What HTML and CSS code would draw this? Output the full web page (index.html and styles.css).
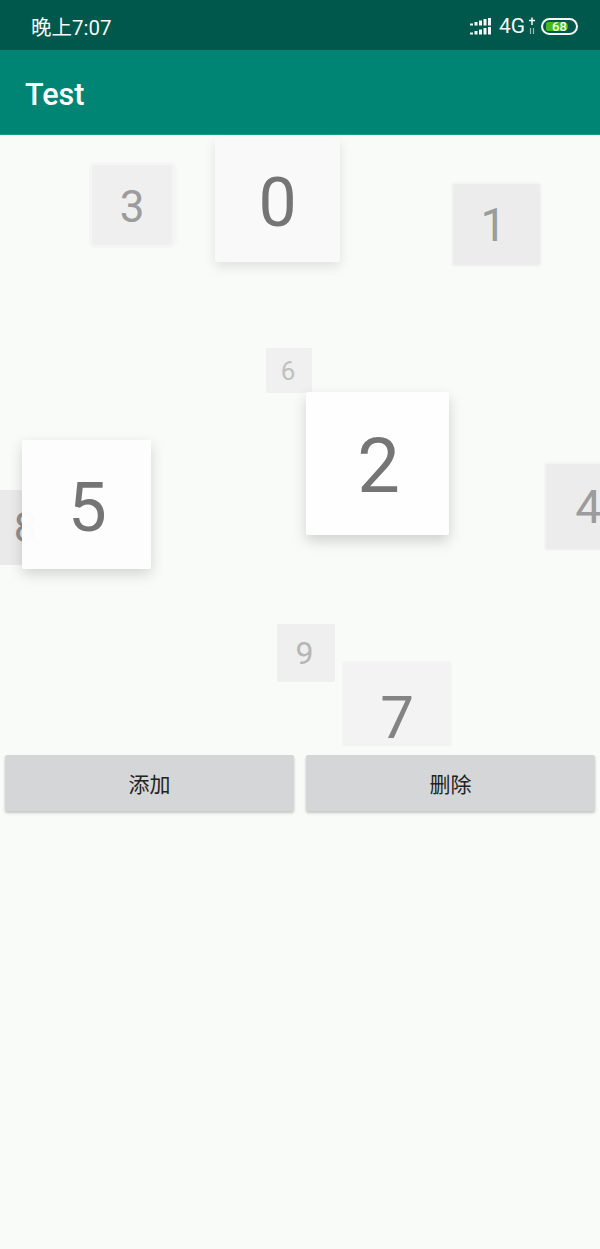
FILE: index.html
```html
<!DOCTYPE html>
<html lang="zh-CN">
<head>
<meta charset="utf-8">
<title>Test</title>
<link rel="stylesheet" href="styles.css">
</head>
<body>
<div class="phone">
  <header class="status-bar">
    <span class="clock">晚上7:07</span>
    <div class="status-icons">
      <svg class="signal" width="22" height="17" viewBox="0 0 22 17" aria-hidden="true">
        <g fill="#f4faf8">
          <rect x="0" y="5.500" width="3" height="2"/><rect x="4.500" y="4" width="3" height="3.500"/><rect x="9" y="2.500" width="3" height="5"/><rect x="13.500" y="1" width="3" height="6.500"/><rect x="18" y="0" width="3" height="7.500"/>
          <rect x="0" y="14.500" width="3" height="2"/><rect x="4.500" y="13" width="3" height="3.500"/><rect x="9" y="11.500" width="3" height="5"/><rect x="13.500" y="10" width="3" height="6.500"/><rect x="18" y="9" width="3" height="7.500"/>
        </g>
      </svg>
      <span class="net">4G</span>
      <svg class="updown" width="8" height="18" viewBox="0 0 8 18" aria-hidden="true">
        <path d="M4 0.500V8M1 3.500H7" stroke="#f4faf8" stroke-width="1.500" fill="none"/>
        <path d="M2.500 11V17M5.500 11V17" stroke="#9fbcb4" stroke-width="1.200" fill="none"/>
      </svg>
      <div class="battery"><div class="battery-fill" style="width:82%"></div><span class="battery-level">68</span></div>
    </div>
  </header>
  <div class="app-bar"><h1 class="title">Test</h1></div>
  <main class="stage">
    <div class="card c8">8</div>
    <div class="card c6">6</div>
    <div class="card c3">3</div>
    <div class="card c1">1</div>
    <div class="card c4">4</div>
    <div class="card c9">9</div>
    <div class="card c7">7</div>
    <div class="card c0">0</div>
    <div class="card c2">2</div>
    <div class="card c5">5</div>
  </main>
  <div class="actions">
    <button class="btn" type="button">添加</button>
    <button class="btn" type="button">删除</button>
  </div>
</div>
</body>
</html>
```
FILE: styles.css
```css
* { box-sizing: border-box; }
html, body { margin: 0; padding: 0; }
body {
  width: 600px;
  height: 1249px;
  overflow: hidden;
  background: #f9fbf9;
  font-family: Roboto, "Noto Sans CJK SC", sans-serif;
}
.phone { display: flex; flex-direction: column; height: 100%; }
.status-bar {
  height: 50px;
  flex: none;
  background: #00584c;
  color: #f4faf8;
  display: flex;
  align-items: center;
  justify-content: space-between;
  padding: 6px 22px 4px 31px;
}
.clock { font-size: 20.500px; }
.status-icons { display: flex; align-items: center; gap: 3px; }
.signal { margin-right: 4px; margin-top: 1px; }
.net { font-size: 21px; line-height: 24px; }
.battery {
  position: relative;
  width: 37px;
  height: 17px;
  margin-left: 2px;
  border: 2px solid #f4faf8;
  border-radius: 9px;
  padding: 2px 3px;
}
.battery-fill { height: 100%; background: #45b81f; border-radius: 2px 5px 5px 2px; }
.battery-level {
  position: absolute;
  left: 9px;
  top: -1px;
  font-size: 13px;
  line-height: 15px;
  font-weight: 500;
  color: #f4fff0;
}
.app-bar {
  height: 85px;
  flex: none;
  background: #008575;
  display: flex;
  align-items: center;
  padding: 4px 25px 0;
  border-bottom: 1px solid #12a08e;
}
.title { margin: 0; font-size: 30.500px; font-weight: 500; color: #fdfffe; }
.stage { position: relative; height: 611px; flex: none; overflow: hidden; }
.card {
  position: absolute;
  display: flex;
  align-items: center;
  justify-content: center;
  color: #757575;
  border-radius: 2px;
}
.c0 { left: 215px; top: 2px; width: 125px; height: 125px; padding-top: 6px; font-size: 68px; background: #f8f9f8; box-shadow: 0 5px 12px rgba(0,0,0,.1); }
.c2 { left: 306px; top: 257px; width: 143px; height: 143px; padding: 5px 0 0 2px; font-size: 76px; background: #fdfefd; box-shadow: 0 6px 14px rgba(0,0,0,.17); }
.c5 { left: 22px; top: 305px; width: 129px; height: 129px; padding: 5px 0 0 2px; font-size: 69px; background: rgba(252,253,252,.985); box-shadow: 0 5px 14px rgba(0,0,0,.16); }
.c3 { left: 92px; top: 30px; width: 80px; height: 80px; padding-top: 3px; font-size: 44px; background: #eeefee; color: #9b9c9b; box-shadow: 0 0 0 3px #f4f5f4, 4px 0 5px rgba(0,0,0,.03); }
.c1 { left: 453px; top: 49px; width: 87px; height: 81px; padding-right: 6px; font-size: 46px; background: #ececec; color: #9b9c9b; box-shadow: 0 0 0 2px #f3f4f3; }
.c4 { left: 546px; top: 329px; width: 85px; height: 85px; font-size: 47px; background: #ebeceb; color: #9b9c9b; box-shadow: 0 0 0 2px #f3f4f3; }
.c6 { left: 266px; top: 213px; width: 46px; height: 45px; padding-right: 2px; font-size: 26px; background: #eff0ef; color: #c0c1c0; }
.c9 { left: 277px; top: 489px; width: 58px; height: 58px; padding-right: 3px; font-size: 32px; background: #eeefee; color: #b5b6b5; }
.c7 { left: 343px; top: 527px; width: 108px; height: 110px; font-size: 60px; background: #f2f3f2; color: #828382; box-shadow: 0 0 0 1px #f6f7f6; }
.c8 { left: -12px; top: 355px; width: 75px; height: 75px; font-size: 42px; background: #e9eae9; color: #8f908f; }
.actions { display: flex; gap: 12px; padding: 9px 5px 0; }
.btn {
  flex: 1;
  height: 56px;
  border: 0;
  border-radius: 2px;
  background: #d5d6d7;
  color: #222;
  font-family: "Noto Sans CJK SC", sans-serif;
  font-size: 21px;
  padding: 0;
  box-shadow: 0 2px 3px rgba(0,0,0,.22);
}
```
